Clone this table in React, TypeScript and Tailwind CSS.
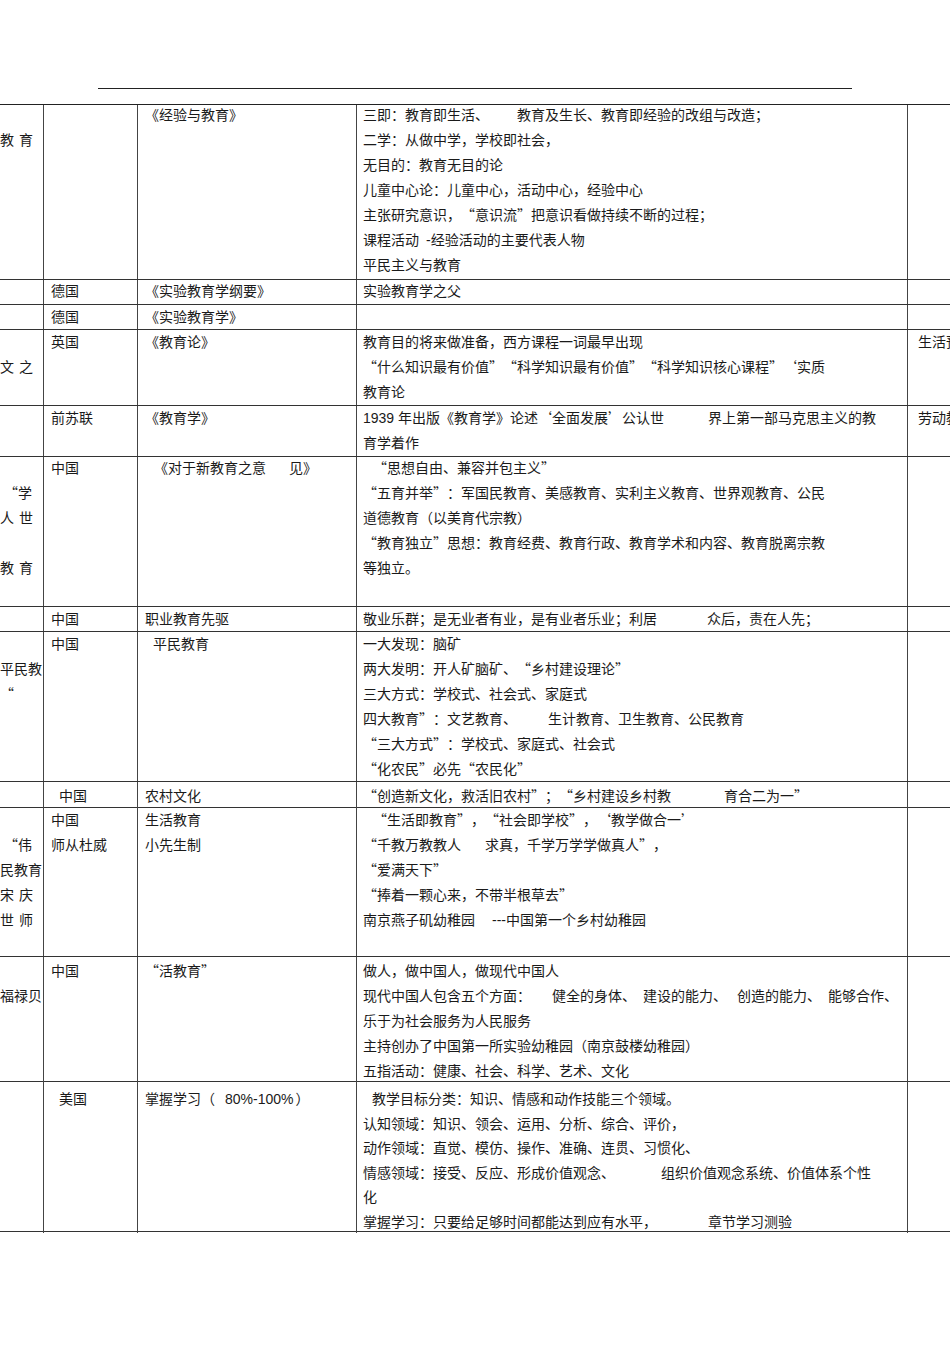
import type { ReactNode } from 'react';
import { Children, cloneElement, isValidElement } from 'react';

type Row = {
  h: string;
  off: string;
  lh?: string;
  cells: ReactNode[][];
};

// spacer for the wide gaps the scanned document has inside lines
const Gap = ({ w = 'w-[5px]' }: { w?: string }) => <span className={`inline-block ${w}`} />;

// latin runs (digits, dashes) use the Arial-width face
const L = ({ children }: { children: ReactNode }) => (
  <span className="font-['Liberation_Sans',sans-serif]">{children}</span>
);

// the document sets curly quotes full width, the font does not
function quotes(s: string): ReactNode[] {
  return s.split(/([“”‘’])/).map((part, i) => {
    if (part === '“' || part === '‘')
      return (
        <span key={i} className="inline-block w-[14px] text-right">
          {part}
        </span>
      );
    if (part === '”' || part === '’')
      return (
        <span key={i} className="inline-block w-[14px] text-left">
          {part}
        </span>
      );
    return part;
  });
}

function fix(node: ReactNode): ReactNode {
  if (typeof node === 'string') return quotes(node);
  if (isValidElement(node)) {
    const kids = (node.props as { children?: ReactNode }).children;
    if (kids === undefined) return node;
    return cloneElement(node, undefined, ...Children.toArray(kids).map(fix));
  }
  return node;
}

const rows: Row[] = [
  {
    h: 'h-[175px]',
    off: '-mt-[3px]',
    cells: [
      ['', <>教<Gap />育</>],
      [],
      ['《经验与教育》'],
      [
        <>三即：教育即生活、<Gap w="w-[28px]" />教育及生长、教育即经验的改组与改造；</>,
        '二学：从做中学，学校即社会，',
        '无目的：教育无目的论',
        '儿童中心论：儿童中心，活动中心，经验中心',
        '主张研究意识，“意识流”把意识看做持续不断的过程；',
        <>课程活动<Gap w="w-[7px]" /><L>-</L>经验活动的主要代表人物</>,
        '平民主义与教育',
      ],
      [],
    ],
  },
  {
    h: 'h-[25px]',
    off: '-mt-[2px]',
    cells: [[], ['德国'], ['《实验教育学纲要》'], ['实验教育学之父'], []],
  },
  {
    h: 'h-[25px]',
    off: '-mt-[1px]',
    cells: [[], ['德国'], ['《实验教育学》'], [], []],
  },
  {
    h: 'h-[76px]',
    off: '-mt-[1px]',
    cells: [
      ['', <>文<Gap />之</>],
      ['英国'],
      ['《教育论》'],
      [
        '教育目的将来做准备，西方课程一词最早出现',
        '“什么知识最有价值”“科学知识最有价值”“科学知识核心课程”‘实质',
        '教育论',
      ],
      ['生活预备说'],
    ],
  },
  {
    h: 'h-[51px]',
    off: '-mt-[1px]',
    cells: [
      [],
      ['前苏联'],
      ['《教育学》'],
      [
        <><L>1939 </L>年出版《教育学》论述‘全面发展’公认世<Gap w="w-[44px]" />界上第一部马克思主义的教</>,
        '育学着作',
      ],
      ['劳动教育'],
    ],
  },
  {
    h: 'h-[150px]',
    off: '-mt-[2px]',
    cells: [
      ['', <span className="pl-[4px]">“学</span>, <>人<Gap />世</>, '', <>教<Gap />育</>],
      ['中国'],
      [<span className="pl-[9px]">《对于新教育之意<Gap w="w-[23px]" />见》</span>],
      [
        <span className="pl-[10px]">“思想自由、兼容并包主义”</span>,
        '“五育并举”：军国民教育、美感教育、实利主义教育、世界观教育、公民',
        '道德教育（以美育代宗教）',
        '“教育独立”思想：教育经费、教育行政、教育学术和内容、教育脱离宗教',
        '等独立。',
      ],
      [],
    ],
  },
  {
    h: 'h-[25px]',
    off: '-mt-[1px]',
    cells: [
      [],
      ['中国'],
      ['职业教育先驱'],
      [<>敬业乐群；是无业者有业，是有业者乐业；利居<Gap w="w-[50px]" />众后，责在人先；</>],
      [],
    ],
  },
  {
    h: 'h-[150px]',
    off: '-mt-[1px]',
    cells: [
      ['', '平民教', '“'],
      ['中国'],
      [<span className="pl-[8px]">平民教育</span>],
      [
        '一大发现：脑矿',
        '两大发明：开人矿脑矿、“乡村建设理论”',
        '三大方式：学校式、社会式、家庭式',
        <>四大教育”：文艺教育、<Gap w="w-[31px]" />生计教育、卫生教育、公民教育</>,
        '“三大方式”：学校式、家庭式、社会式',
        '“化农民”必先“农民化”',
      ],
      [],
    ],
  },
  {
    h: 'h-[26px]',
    off: 'mt-[1px]',
    cells: [
      [],
      [<span className="pl-[8px]">中国</span>],
      ['农村文化'],
      [<>“创造新文化，救活旧农村”；“乡村建设乡村教<Gap w="w-[53px]" />育合二为一”</>],
      [],
    ],
  },
  {
    h: 'h-[149px]',
    off: '-mt-[1px]',
    cells: [
      ['', <span className="pl-[4px]">“伟</span>, '民教育', <>宋<Gap />庆</>, <>世<Gap />师</>],
      ['中国', '师从杜威'],
      ['生活教育', '小先生制'],
      [
        <span className="pl-[10px]">“生活即教育”，“社会即学校”，‘教学做合一’</span>,
        <>“千教万教教人<Gap w="w-[24px]" />求真，千学万学学做真人”，</>,
        '“爱满天下”',
        '“捧着一颗心来，不带半根草去”',
        <>南京燕子矶幼稚园<Gap w="w-[17px]" /><L>---</L>中国第一个乡村幼稚园</>,
      ],
      [],
    ],
  },
  {
    h: 'h-[125px]',
    off: 'mt-[1px]',
    cells: [
      ['', '福禄贝'],
      ['中国'],
      ['“活教育”'],
      [
        '做人，做中国人，做现代中国人',
        <>
          现代中国人包含五个方面：<Gap w="w-[21px]" />健全的身体、<Gap w="w-[7px]" />建设的能力、
          <Gap w="w-[10px]" />创造的能力、<Gap w="w-[7px]" />能够合作、
        </>,
        '乐于为社会服务为人民服务',
        '主持创办了中国第一所实验幼稚园（南京鼓楼幼稚园）',
        '五指活动：健康、社会、科学、艺术、文化',
      ],
      [],
    ],
  },
  {
    h: 'h-[150px]',
    off: 'mt-[4px]',
    lh: 'h-[24.5px] leading-[24.5px]',
    cells: [
      [],
      [<span className="pl-[8px]">美国</span>],
      [<>掌握学习（<Gap w="w-[10px]" /><L>80%-100%</L><Gap w="w-[2px]" />）</>],
      [
        <span className="pl-[9px]">教学目标分类：知识、情感和动作技能三个领域。</span>,
        '认知领域：知识、领会、运用、分析、综合、评价，',
        '动作领域：直觉、模仿、操作、准确、连贯、习惯化、',
        <>情感领域：接受、反应、形成价值观念、<Gap w="w-[46px]" />组织价值观念系统、价值体系个性</>,
        '化',
        <>掌握学习：只要给足够时间都能达到应有水平，<Gap w="w-[51px]" />章节学习测验</>,
      ],
      [],
    ],
  },
];

const padding = ['pl-0', 'pl-[7px]', 'pl-[7px]', 'pl-[6px]', 'pl-[10px]'];

export default function App() {
  return (
    <div
      lang="zh-CN"
      className="w-[950px] min-h-[1345px] overflow-hidden bg-white pt-[88px] font-['Noto_Sans_CJK_SC',sans-serif] text-[14px] text-[#1a1a1a]"
    >
      <div className="ml-[98px] h-px w-[754px] bg-[#222]" />
      <div className="mt-[15px] w-[1010px] border-t border-[#222]">
        {rows.map((row, i) => (
          <div
            key={i}
            className={`grid grid-cols-[44px_94px_219px_551px_102px] border-b border-[#333] ${row.h}`}
          >
            {row.cells.map((lines, j) => (
              <div
                key={j}
                className={`${padding[j]} ${j < 4 ? 'border-r border-[#444]' : ''} whitespace-nowrap`}
              >
                <div className={row.off}>
                  {lines.map((line, k) => (
                    <div key={k} className={row.lh ?? 'h-[25px] leading-[25px]'}>
                      {fix(line)}
                    </div>
                  ))}
                </div>
              </div>
            ))}
          </div>
        ))}
      </div>
    </div>
  );
}
